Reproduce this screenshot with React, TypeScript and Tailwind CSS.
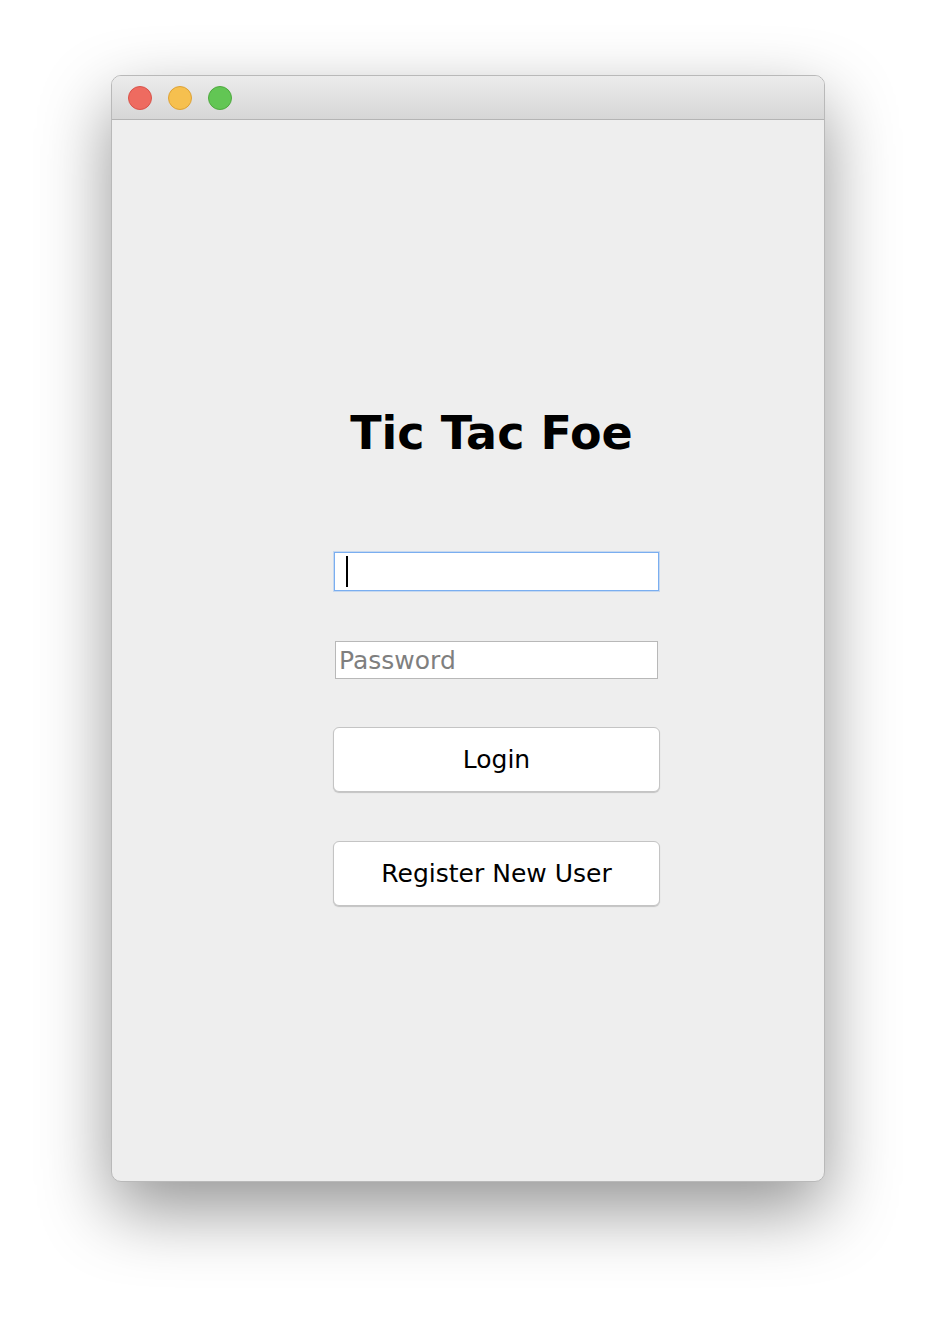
import React from 'react';

const TrafficLight = ({ fill, ring }: { fill: string; ring: string }) => (
  <span className={`block h-[24px] w-[24px] rounded-full border ${fill} ${ring}`} />
);

const App = () => {
  return (
    <div className="min-h-[1330px] w-full bg-white pt-[75px] font-['DejaVu_Sans',sans-serif]">
      <div className="mx-auto flex h-[1107px] w-[714px] flex-col overflow-hidden rounded-[10px] border border-[#b9b9b9] bg-[#eeeeee] shadow-[0_28px_70px_rgba(0,0,0,0.42)]">
        {/* Title bar */}
        <div className="flex h-[44px] shrink-0 items-center gap-[16px] border-b border-[#b4b4b4] bg-gradient-to-b from-[#ececec] to-[#d6d6d6] pl-[16px]">
          <TrafficLight fill="bg-[#ee6b60]" ring="border-[#d9534a]" />
          <TrafficLight fill="bg-[#f6c04f]" ring="border-[#dea236]" />
          <TrafficLight fill="bg-[#62c654]" ring="border-[#4fa93f]" />
        </div>

        {/* Login form */}
        <div className="flex flex-col pl-[221px] pt-[290px]">
          <div className="flex w-[327px] flex-col">
            <h1 className="pr-[10px] text-center text-[46px] leading-none font-bold text-black">
              Tic Tac Foe
            </h1>

            <div className="mt-[96px] ml-[1px] flex h-[39px] w-[325px] items-center border border-[#7aaef0] bg-white pl-[11px] shadow-[0_0_0_1px_rgba(122,174,240,0.35)]">
              <span className="block h-[31px] w-[2px] bg-black" />
            </div>

            <div className="mt-[50px] ml-[2px] flex h-[38px] w-[323px] items-center border border-[#b8b8b8] bg-white pl-[3px]">
              <span className="text-[25px] leading-none text-[#7f7f7f]">Password</span>
            </div>

            <button className="mt-[48px] h-[65px] w-[327px] rounded-[6px] border border-[#c4c4c4] bg-white text-[25px] text-black shadow-[0_1px_1px_rgba(0,0,0,0.18)]">
              Login
            </button>

            <button className="mt-[49px] h-[65px] w-[327px] rounded-[6px] border border-[#c4c4c4] bg-white text-[25px] text-black shadow-[0_1px_1px_rgba(0,0,0,0.18)]">
              Register New User
            </button>
          </div>
        </div>
      </div>
    </div>
  );
};

export default App;
